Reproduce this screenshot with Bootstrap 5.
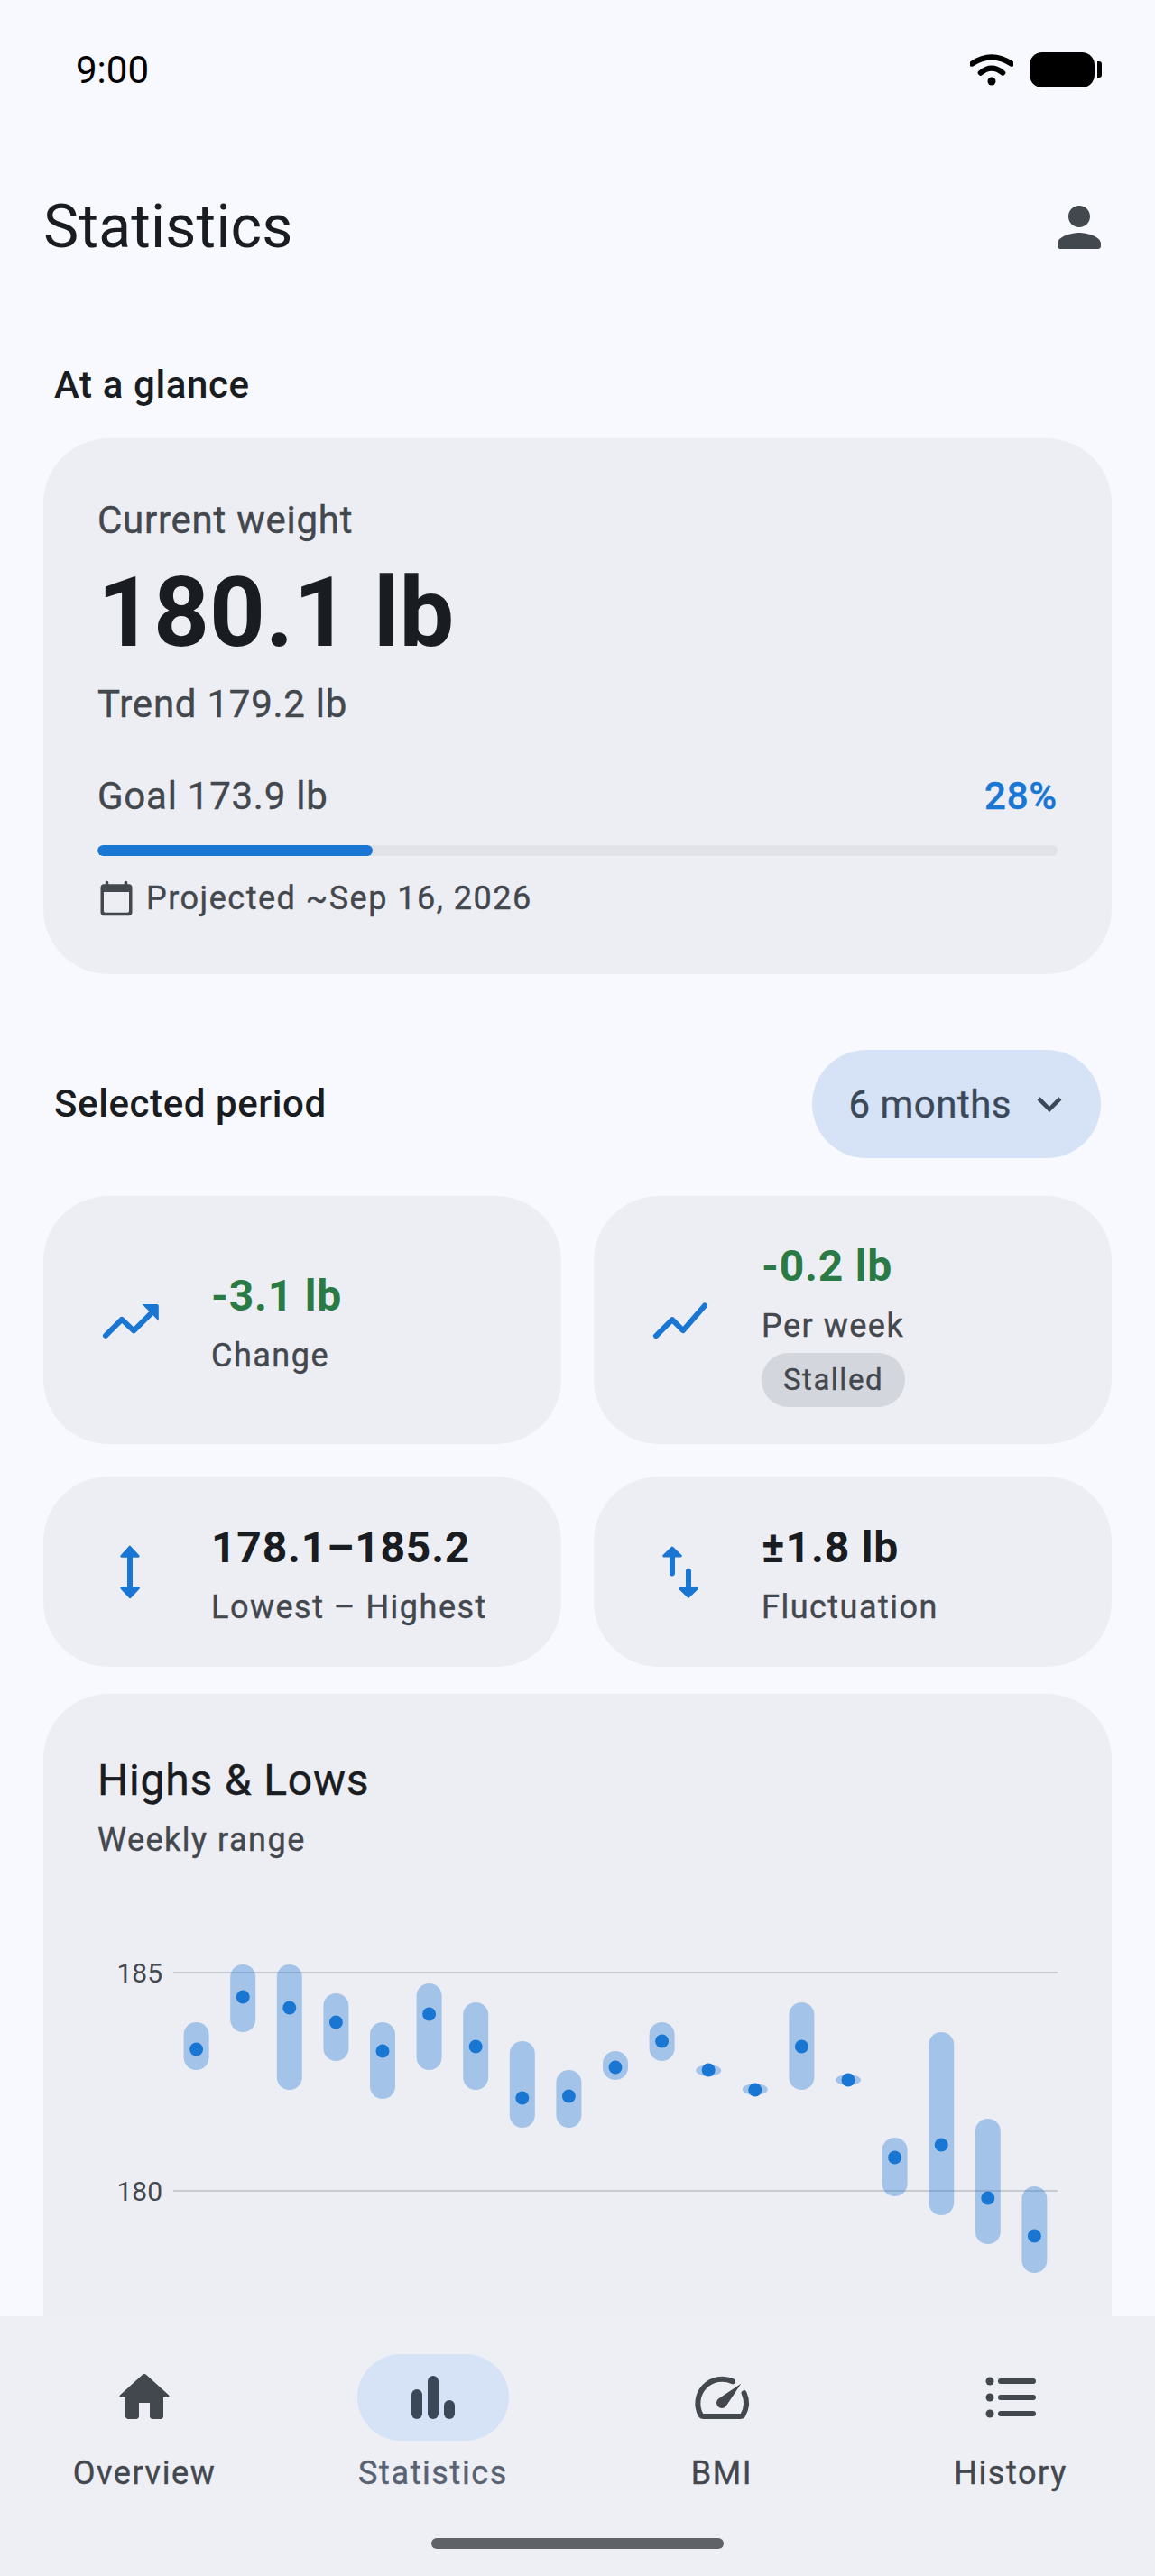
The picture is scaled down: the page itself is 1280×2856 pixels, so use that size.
<!DOCTYPE html>
<html lang="en">
<head>
    <meta charset="UTF-8">
    <title>Statistics</title>
    <link href="https://cdn.jsdelivr.net/npm/bootstrap@5.3.3/dist/css/bootstrap.min.css" rel="stylesheet">
    <style>
        /* App screen colours and type, scaled at 3px per dp */
        html, body { height: 2856px; overflow: hidden; }
        body {
            background: #f8f9ff;
            color: #191c20;
            font-family: Roboto, "Liberation Sans", sans-serif;
        }
        .status-strip { height: 154px; padding: 0 59px 0 84px; font-size: 42px; color: #000; }
        .wifi-glyph { width: 48px; height: 36px; margin-right: 18px; }
        .battery-body { width: 72px; height: 39px; background: #000; border-radius: 14px; }
        .battery-tip { width: 5px; height: 18px; margin-left: 3px; background: #000; border-radius: 0 3px 3px 0; }
        .top-bar { height: 192px; padding: 0 48px; }
        .top-title { font-size: 66px; font-weight: 400; line-height: 88px; letter-spacing: .2px; margin: 4px 0 0; }
        .top-bar svg { width: 72px; height: 72px; fill: #43474e; margin-top: 4px; }
        .screen-body { padding: 0 48px; }
        .group-title { font-size: 42px; font-weight: 500; line-height: 60px; letter-spacing: .6px; margin: 0; }
        .glance-title { padding: 51px 12px 29px; }
        .surface-box { background: #edeef4; border: 0; border-radius: 72px; }
        .glance-box { padding: 61px 60px 54px; }
        /* Regular Roboto reads too thin here and Medium too heavy, so thicken it a little */
        .body-line, .project-line, .stat-label, .stalled-chip, .tab-item, .period-btn, .chart-title {
            -webkit-text-stroke: .4px currentColor;
        }
        .body-line { font-size: 42px; line-height: 60px; letter-spacing: .75px; color: #43474e; }
        .big-weight { font-size: 108px; font-weight: 700; line-height: 144px; }
        .goal-line { margin-top: 42px; }
        .goal-pct { color: #1976d2; font-weight: 500; }
        .goal-track { height: 12px; margin-top: 24px; background: #e0e2e8; border-radius: 6px; }
        .goal-track .progress-bar { background: #1976d2; border-radius: 6px; }
        .project-line { margin-top: 17px; gap: 12px; font-size: 36px; line-height: 60px; letter-spacing: 1.5px; color: #43474e; }
        .project-line svg { width: 42px; height: 42px; fill: #43474e; }
        .period-row { margin-top: 84px; margin-bottom: 42px; padding: 0 12px; }
        .period-btn {
            height: 120px; padding: 0 30px 0 40px; gap: 15px;
            background: #d6e3f7; color: #3b4858; border: 0; border-radius: 60px;
            font-size: 42px; letter-spacing: .5px;
        }
        .period-btn:hover { background: #d6e3f7; color: #3b4858; }
        .period-btn svg { width: 54px; height: 54px; fill: #3b4858; }
        .stat-grid { --bs-gutter-x: 36px; --bs-gutter-y: 36px; }
        .stat-box { padding: 0 60px; gap: 54px; }
        .stat-row-one { height: 275px; }
        .stat-row-two { height: 211px; }
        .stat-box svg { width: 72px; height: 72px; flex: none; fill: #1976d2; }
        .stat-text { padding-top: 6px; }
        .stat-value { font-size: 48px; font-weight: 700; line-height: 72px; letter-spacing: .8px; }
        .stat-good { color: #2a7a45; }
        .stat-label { font-size: 36px; line-height: 60px; letter-spacing: 1.5px; color: #43474e; }
        .stalled-chip {
            height: 60px; padding: 0 24px; background: #d3d6dd; border-radius: 30px;
            font-size: 33px; line-height: 60px; letter-spacing: 1.5px; color: #43474e;
        }
        .chart-box { margin-top: 30px; padding: 60px 60px 0; border-radius: 72px 72px 0 0; }
        .chart-title { font-size: 48px; font-weight: 400; line-height: 72px; letter-spacing: .8px; margin: 0; }
        .chart-area { display: block; width: 1064px; height: 560px; }
        .chart-tick { font-size: 30px; fill: #43474e; }
        .bottom-tabs { position: fixed; left: 0; right: 0; bottom: 0; height: 288px; background: #edeff4; padding-top: 42px; }
        .tab-item { width: 320px; font-size: 36px; line-height: 48px; letter-spacing: 1.6px; color: #43474e; }
        .tab-icon { width: 168px; height: 96px; border-radius: 48px; margin-bottom: 12px; }
        .tab-icon svg { width: 72px; height: 72px; fill: #43474e; stroke: none; }
        .tab-active { color: #586273; }
        .tab-active .tab-icon { background: #d6e3f7; }
        .tab-active .tab-icon svg { fill: #3b4858; }
        .home-pill { position: absolute; left: 478px; bottom: 30px; width: 324px; height: 12px; background: #5f6368; border-radius: 6px; }
    </style>
</head>
<body>

<div class="status-strip d-flex justify-content-between align-items-center">
    <span>9:00</span>
    <div class="d-flex align-items-center">
        <svg class="wifi-glyph" viewBox="0 0 48 36">
            <path d="M2 11.700Q24 -3 46 11.700M11.700 21.700Q24 11.500 36.300 21.700" fill="none" stroke="#000" stroke-width="6" stroke-linecap="round"/>
            <circle cx="24" cy="31" r="4.500"/>
        </svg>
        <div class="battery-body"></div>
        <div class="battery-tip"></div>
    </div>
</div>

<div class="top-bar d-flex justify-content-between align-items-center">
    <h1 class="top-title">Statistics</h1>
    <svg viewBox="0 0 24 24"><path d="M12 12c2.210 0 4-1.790 4-4s-1.790-4-4-4-4 1.790-4 4 1.790 4 4 4zm0 2c-2.670 0-8 1.340-8 4v1c0 .55.45 1 1 1h14c.55 0 1-.45 1-1v-1c0-2.660-5.330-4-8-4z"/></svg>
</div>

<main class="screen-body">
    <h2 class="group-title glance-title">At a glance</h2>

    <div class="card surface-box glance-box">
        <div class="body-line">Current weight</div>
        <div class="big-weight">180.1 lb</div>
        <div class="body-line">Trend 179.2 lb</div>
        <div class="body-line goal-line d-flex justify-content-between">
            <span>Goal 173.9 lb</span>
            <span class="goal-pct">28%</span>
        </div>
        <div class="progress goal-track">
            <div class="progress-bar" style="width: 28.7%"></div>
        </div>
        <div class="project-line d-flex align-items-center">
            <svg viewBox="0 0 24 24"><path d="M20 3h-1V2c0-.55-.45-1-1-1s-1 .45-1 1v1H7V2c0-.55-.45-1-1-1s-1 .45-1 1v1H4c-1.100 0-2 .9-2 2v16c0 1.100.9 2 2 2h16c1.100 0 2-.9 2-2V5c0-1.100-.9-2-2-2zm-1 18H5c-.55 0-1-.45-1-1V8h16v12c0 .55-.45 1-1 1z"/></svg>
            <span>Projected ~Sep 16, 2026</span>
        </div>
    </div>

    <div class="period-row d-flex justify-content-between align-items-center">
        <h2 class="group-title">Selected period</h2>
        <button type="button" class="btn period-btn d-flex align-items-center">
            <span>6 months</span>
            <svg viewBox="0 0 24 24"><path d="M16.590 8.590 12 13.170 7.410 8.590 6 10l6 6 6-6z"/></svg>
        </button>
    </div>

    <div class="row stat-grid">
        <div class="col-6">
            <div class="card surface-box stat-box stat-row-one flex-row align-items-center">
                <svg viewBox="0 0 24 24"><path d="M3 17.600l6-6 4.400 4.200 7-7" fill="none" stroke="#1976d2" stroke-width="2" stroke-linecap="round" stroke-linejoin="round"/><path d="M16.500 6h5.500c.3 0 .6.3.6.6V12.200z"/></svg>
                <div class="stat-text">
                    <div class="stat-value stat-good">-3.1 lb</div>
                    <div class="stat-label">Change</div>
                </div>
            </div>
        </div>
        <div class="col-6">
            <div class="card surface-box stat-box stat-row-one flex-row align-items-center">
                <svg viewBox="0 0 24 24"><path d="M3 17.700l6-6 4 4 8-9.200" fill="none" stroke="#1976d2" stroke-width="2" stroke-linecap="round" stroke-linejoin="round"/></svg>
                <div>
                    <div class="stat-value stat-good">-0.2 lb</div>
                    <div class="stat-label">Per week</div>
                    <span class="stalled-chip d-inline-block">Stalled</span>
                </div>
            </div>
        </div>
        <div class="col-6">
            <div class="card surface-box stat-box stat-row-two flex-row align-items-center">
                <svg viewBox="0 0 24 24"><path transform="translate(0 -.96) scale(1 1.080)" d="M13 7h2.100c.4 0 .6-.5.3-.8l-3.100-3.100a.5.5 0 0 0-.7 0L8.600 6.200c-.3.3-.1.8.3.8H11v10H8.900c-.4 0-.6.5-.3.800l3.100 3.100c.2.2.500.2.700 0l3.100-3.100c.3-.3.100-.8-.3-.8H13z"/></svg>
                <div class="stat-text">
                    <div class="stat-value">178.1–185.2</div>
                    <div class="stat-label">Lowest – Highest</div>
                </div>
            </div>
        </div>
        <div class="col-6">
            <div class="card surface-box stat-box stat-row-two flex-row align-items-center">
                <svg viewBox="0 0 24 24"><path transform="translate(0 .6)" d="M16 17V11c0-.55-.45-1-1-1s-1 .45-1 1v6h-2.100c-.45 0-.67.54-.35.850l3.100 3c.2.190.5.190.7 0l3.100-3c.32-.31.1-.85-.35-.85H16z"/><path transform="translate(0 -.5)" d="M8.650 3.150l-3.100 3c-.32.31-.1.85.35.85H8v6c0 .55.45 1 1 1s1-.45 1-1V7h2.100c.45 0 .67-.54.35-.85l-3.100-3a.5.5 0 0 0-.7 0z"/></svg>
                <div class="stat-text">
                    <div class="stat-value">±1.8 lb</div>
                    <div class="stat-label">Fluctuation</div>
                </div>
            </div>
        </div>
    </div>

    <div class="card surface-box chart-box">
        <h3 class="chart-title">Highs &amp; Lows</h3>
        <div class="stat-label">Weekly range</div>
        <svg id="rangeChart" class="chart-area" viewBox="0 0 1064 560"></svg>
    </div>
</main>

<nav class="bottom-tabs d-flex">
    <div class="tab-item d-flex flex-column align-items-center">
        <div class="tab-icon d-flex justify-content-center align-items-center">
            <svg viewBox="0 0 24 24"><path d="M10 19v-5h4v5c0 .55.45 1 1 1h3c.55 0 1-.45 1-1v-7h1.700c.46 0 .68-.57.33-.87L12.670 3.600c-.38-.34-.96-.34-1.340 0l-8.360 7.530c-.34.3-.13.87.33.87H5v7c0 .55.45 1 1 1h3c.55 0 1-.45 1-1z"/></svg>
        </div>
        <span>Overview</span>
    </div>
    <div class="tab-item tab-active d-flex flex-column align-items-center">
        <div class="tab-icon d-flex justify-content-center align-items-center">
            <svg viewBox="0 0 24 24"><rect x="4" y="9" width="4" height="11" rx="2"/><rect x="10" y="4" width="4" height="16" rx="2"/><rect x="16" y="13" width="4" height="7" rx="2"/></svg>
        </div>
        <span>Statistics</span>
    </div>
    <div class="tab-item d-flex flex-column align-items-center">
        <div class="tab-icon d-flex justify-content-center align-items-center">
            <svg viewBox="0 0 24 24"><path d="M16 6.100A9 9 0 0 0 4.200 18.500Q4.500 19 5.200 19H18.800Q19.500 19 19.800 18.500A9 9 0 0 0 20.200 10.400" fill="none" stroke="#43474e" stroke-width="2" stroke-linecap="round"/><path d="M10.590 15.410a2 2 0 0 0 2.830 0l5.660-8.490-8.490 5.660a2 2 0 0 0 0 2.830z"/></svg>
        </div>
        <span>BMI</span>
    </div>
    <div class="tab-item d-flex flex-column align-items-center">
        <div class="tab-icon d-flex justify-content-center align-items-center">
            <svg viewBox="0 0 24 24"><circle cx="4.330" cy="6" r="1.500"/><circle cx="4.330" cy="12" r="1.500"/><circle cx="4.330" cy="18" r="1.500"/><rect x="7.330" y="5" width="14" height="2" rx="1"/><rect x="7.330" y="11" width="14" height="2" rx="1"/><rect x="7.330" y="17" width="14" height="2" rx="1"/></svg>
        </div>
        <span>History</span>
    </div>
    <div class="home-pill"></div>
</nav>

<script>
    // Weekly ranges as [top, bottom, dot] in page pixels, read off the chart
    const weeks = [
        [2242, 2295, 2272], [2178, 2253, 2214], [2178, 2317, 2226], [2210, 2285, 2242],
        [2242, 2327, 2274], [2199, 2295, 2233], [2220, 2317, 2269], [2263, 2359, 2326],
        [2295, 2359, 2324], [2274, 2306, 2292], [2242, 2285, 2263], [2289, 2302, 2295],
        [2310, 2323, 2317], [2220, 2317, 2269], [2300, 2312, 2306], [2370, 2435, 2392],
        [2253, 2456, 2378], [2349, 2488, 2437], [2424, 2520, 2479]
    ];
    const originX = 108;
    const chart = document.getElementById('rangeChart');
    const originY = chart.getBoundingClientRect().top; // top of the svg on the page
    let shapes = '';

    [[185, 2187], [180, 2429]].forEach(([value, y]) => {
        const lineY = y - originY;
        shapes += `<line x1="84" x2="1064" y1="${lineY}" y2="${lineY}" stroke="#c8cad1" stroke-width="2"/>`;
        shapes += `<text class="chart-tick" x="72" y="${lineY + 11}" text-anchor="end">${value}</text>`;
    });

    weeks.forEach(([top, bottom, dot], i) => {
        const cx = 217.6 + i * 51.6 - originX;
        shapes += `<rect x="${cx - 14}" y="${top - originY}" width="28" height="${bottom - top}" rx="14" fill="#1976d2" fill-opacity=".35"/>`;
        shapes += `<circle cx="${cx}" cy="${dot - originY}" r="7.500" fill="#1976d2"/>`;
    });

    chart.innerHTML = shapes;
</script>
</body>
</html>
